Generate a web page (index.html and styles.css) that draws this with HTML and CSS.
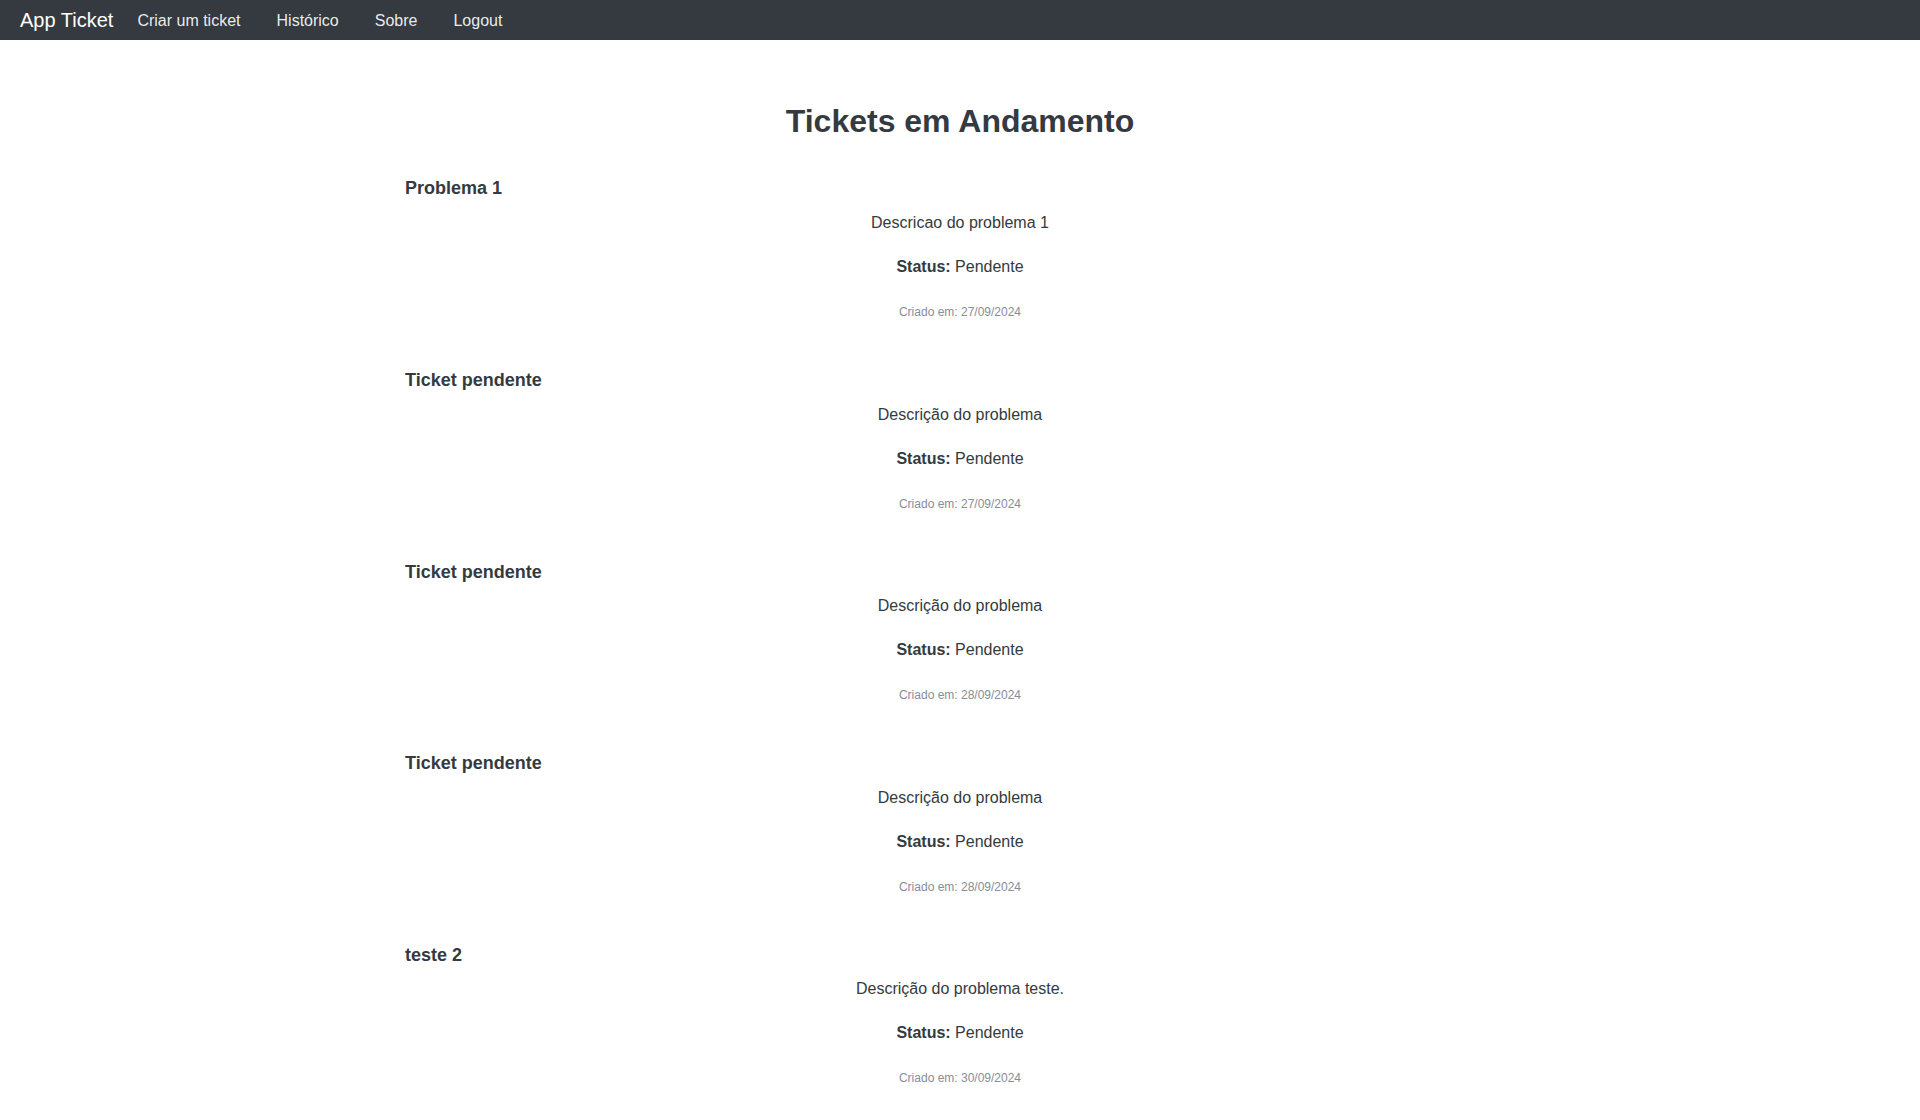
FILE: index.html
```html
<!DOCTYPE html>
<html lang="pt-BR">
<head>
<meta charset="utf-8">
<title>App Ticket</title>
<link rel="stylesheet" href="styles.css">
</head>
<body>
<nav class="navbar">
  <a class="brand" href="#">App Ticket</a>
  <ul class="nav">
    <li><a class="nav-link" href="#">Criar um ticket</a></li>
    <li><a class="nav-link" href="#">Histórico</a></li>
    <li><a class="nav-link" href="#">Sobre</a></li>
    <li><a class="nav-link" href="#">Logout</a></li>
  </ul>
</nav>
<main class="container">
  <h2 class="page-title">Tickets em Andamento</h2>
  <section class="ticket">
    <h3 class="ticket-title">Problema 1</h3>
    <p class="ticket-desc">Descricao do problema 1</p>
    <p class="ticket-status"><strong>Status:</strong> Pendente</p>
    <p class="ticket-date">Criado em: 27/09/2024</p>
  </section>
  <section class="ticket">
    <h3 class="ticket-title">Ticket pendente</h3>
    <p class="ticket-desc">Descrição do problema</p>
    <p class="ticket-status"><strong>Status:</strong> Pendente</p>
    <p class="ticket-date">Criado em: 27/09/2024</p>
  </section>
  <section class="ticket">
    <h3 class="ticket-title">Ticket pendente</h3>
    <p class="ticket-desc">Descrição do problema</p>
    <p class="ticket-status"><strong>Status:</strong> Pendente</p>
    <p class="ticket-date">Criado em: 28/09/2024</p>
  </section>
  <section class="ticket">
    <h3 class="ticket-title">Ticket pendente</h3>
    <p class="ticket-desc">Descrição do problema</p>
    <p class="ticket-status"><strong>Status:</strong> Pendente</p>
    <p class="ticket-date">Criado em: 28/09/2024</p>
  </section>
  <section class="ticket">
    <h3 class="ticket-title">teste 2</h3>
    <p class="ticket-desc">Descrição do problema teste.</p>
    <p class="ticket-status"><strong>Status:</strong> Pendente</p>
    <p class="ticket-date">Criado em: 30/09/2024</p>
  </section>
</main>
</body>
</html>
```

FILE: styles.css
```css
*, *::before, *::after {
  box-sizing: border-box;
}
html, body {
  margin: 0;
  padding: 0;
}
body {
  font-family: "Liberation Sans", Arial, sans-serif;
  font-size: 16px;
  line-height: 1.5;
  color: #343a40;
  background: #fff;
}
.navbar {
  display: flex;
  align-items: center;
  height: 40px;
  padding: 0 20px;
  background: #343a40;
}
.brand {
  font-size: 20px;
  line-height: 1.5;
  color: #fff;
  text-decoration: none;
  margin-right: 16px;
}
.nav {
  display: flex;
  gap: 20px;
  list-style: none;
  margin: 0;
  padding: 2px 0 0;
}
.nav-link {
  display: block;
  padding: 0 8px;
  color: rgba(255, 255, 255, 0.92);
  text-decoration: none;
  font-size: 16px;
  line-height: 1.5;
}
.container {
  max-width: 1140px;
  margin: 0 auto;
  padding: 0 15px;
}
.page-title {
  margin: 62px 0 38px;
  font-size: 32px;
  line-height: 1.2;
  font-weight: 700;
  text-align: center;
}
.ticket {
  margin-bottom: 49px;
}
.ticket-title {
  margin: 0 0 11px;
  font-size: 18px;
  line-height: 1.2;
  font-weight: 700;
}
.ticket-desc {
  margin: 0 0 20px;
  text-align: center;
}
.ticket-status {
  margin: 0 0 24px;
  text-align: center;
}
.ticket-date {
  margin: 0;
  font-size: 12px;
  color: #868e96;
  text-align: center;
}
```
